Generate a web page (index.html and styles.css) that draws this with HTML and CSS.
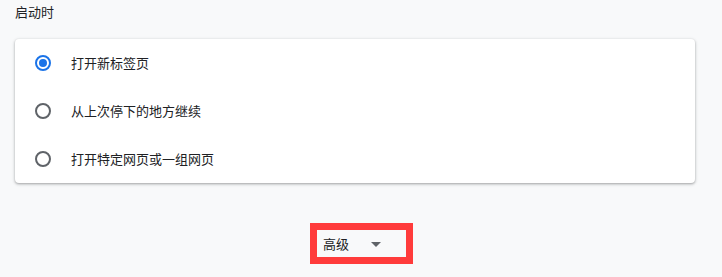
FILE: index.html
```html
<!DOCTYPE html>
<html lang="zh-CN">
<head>
<meta charset="utf-8">
<title>启动时</title>
<link rel="stylesheet" href="styles.css">
</head>
<body>
<div class="page">
  <h2 class="heading">启动时</h2>
  <div class="card">
    <label class="row">
      <span class="radio checked"></span>
      <span class="label">打开新标签页</span>
    </label>
    <label class="row">
      <span class="radio"></span>
      <span class="label">从上次停下的地方继续</span>
    </label>
    <label class="row">
      <span class="radio"></span>
      <span class="label">打开特定网页或一组网页</span>
    </label>
  </div>
  <div class="advanced-wrap">
    <div class="advanced">
      <span class="adv-text">高级</span>
      <span class="arrow"></span>
    </div>
  </div>
</div>
</body>
</html>
```

FILE: styles.css
```css
html, body {
  margin: 0;
  padding: 0;
  background: #f8f9fa;
}
body {
  font-family: "Noto Sans CJK SC", "Noto Sans", sans-serif;
  font-size: 13px;
  color: #202124;
}
.page {
  padding: 0 14px 0 15px;
}
.heading {
  margin: 0;
  padding-top: 4px;
  font-size: 13px;
  font-weight: 400;
  line-height: 16px;
  color: #202124;
}
.card {
  margin-top: 19px;
  margin-right: 13px;
  background: #fff;
  border-radius: 4px;
  box-shadow: 0 1px 2px 0 rgba(60, 64, 67, 0.3), 0 1px 3px 1px rgba(60, 64, 67, 0.15);
}
.row {
  display: flex;
  align-items: center;
  height: 48px;
  padding-left: 20px;
  gap: 20px;
}
.radio {
  box-sizing: border-box;
  width: 16px;
  height: 16px;
  border: 2px solid #5f6368;
  border-radius: 50%;
  display: flex;
  align-items: center;
  justify-content: center;
  flex: none;
}
.radio.checked {
  border-color: #1a73e8;
}
.radio.checked::after {
  content: "";
  width: 8px;
  height: 8px;
  border-radius: 50%;
  background: #1a73e8;
}
.label {
  line-height: 20px;
}
.advanced-wrap {
  display: flex;
  justify-content: center;
  margin-top: 40px;
}
.advanced {
  box-sizing: border-box;
  width: 103px;
  height: 41px;
  border: 7px solid #ff3b3b;
  background: #f8f9fa;
  display: flex;
  align-items: center;
  padding-left: 6px;
}
.adv-text {
  line-height: 20px;
  color: #202124;
}
.arrow {
  margin-left: 22px;
  margin-top: 2px;
  width: 0;
  height: 0;
  border-left: 5px solid transparent;
  border-right: 5px solid transparent;
  border-top: 5px solid #5f6368;
}
```
